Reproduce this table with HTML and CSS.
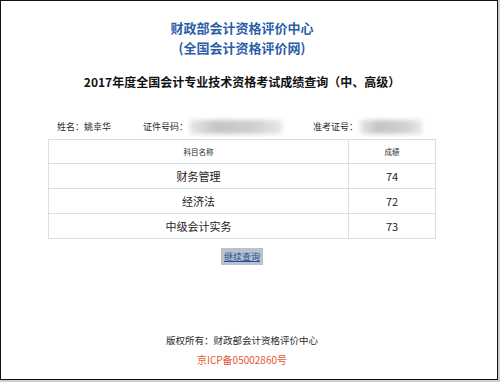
FILE: index.html
```html
<!DOCTYPE html>
<html lang="zh-CN">
<head>
<meta charset="utf-8">
<title>成绩查询</title>
<link rel="stylesheet" href="styles.css">
</head>
<body>
<div class="frame">
  <div class="content">
    <div class="org">
      <div>财政部会计资格评价中心</div>
      <div>(全国会计资格评价网)</div>
    </div>
    <div class="heading">2017年度全国会计专业技术资格考试成绩查询（中、高级）</div>
    <div class="info">
      <div class="info-item name">姓名：姚幸华</div>
      <div class="info-item idno">证件号码：<span class="blur blur-id"></span></div>
      <div class="info-item exam">准考证号：<span class="blur blur-exam"></span></div>
    </div>
    <table class="scores">
      <tr class="head"><th class="c-subject">科目名称</th><th class="c-score">成绩</th></tr>
      <tr><td>财务管理</td><td>74</td></tr>
      <tr><td>经济法</td><td>72</td></tr>
      <tr><td>中级会计实务</td><td>73</td></tr>
    </table>
    <div class="btn-row"><a class="btn" href="#">继续查询</a></div>
    <div class="footer">
      <div class="copy">版权所有：财政部会计资格评价中心</div>
      <div class="icp">京ICP备05002860号</div>
    </div>
  </div>
</div>
</body>
</html>
```
FILE: styles.css
```css
html, body {
  margin: 0;
  padding: 0;
  background: #cfcfcf;
}
body {
  font-family: "Noto Sans CJK SC", "Noto Sans", sans-serif;
  color: #222;
}
.frame {
  box-sizing: border-box;
  width: 498px;
  height: 380px;
  border: 1px solid #111;
  background: #fff;
  padding: 17px 14px 0 0;
}
.content {
  display: flex;
  flex-direction: column;
  align-items: center;
}
.org {
  color: #2b5ea8;
  font-weight: bold;
  font-size: 13px;
  line-height: 20px;
  text-align: center;
}
.heading {
  margin-top: 14px;
  font-size: 12px;
  font-weight: bold;
  line-height: 20px;
  color: #111;
}
.info {
  margin-top: 27px;
  width: 388px;
  box-sizing: border-box;
  padding-left: 9px;
  display: flex;
  align-items: center;
  font-size: 9px;
  line-height: 16px;
  color: #2a2a2a;
  height: 16px;
}
.info-item {
  display: flex;
  align-items: center;
}
.name { width: 86px; }
.idno { width: 170px; }
.blur {
  display: inline-block;
  height: 14px;
  background: linear-gradient(90deg, #e6e6e6, #c4c4c4 30%, #cfcfcf 70%, #e8e8e8);
  filter: blur(2px);
  margin-left: 2px;
}
.blur-id { width: 92px; }
.blur-exam { width: 62px; }
.scores {
  margin-top: 4px;
  width: 388px;
  border-collapse: collapse;
  border: 1px solid #d9e6ea;
  text-align: center;
}
.scores th, .scores td {
  border: 1px solid #d3e2e8;
  padding: 0;
  font-weight: normal;
}
.scores th {
  height: 23px;
  font-size: 7.5px;
  color: #2a2a2a;
}
.scores td {
  height: 24px;
  font-size: 11px;
  color: #222;
}
.c-subject { width: 299px; }
.btn-row {
  margin-top: 9px;
}
.btn {
  display: block;
  width: 42px;
  height: 17px;
  line-height: 17px;
  background: #bcc0cc;
  color: #1b4f9b;
  font-size: 9px;
  text-align: center;
  text-decoration: underline;
}
.footer {
  margin-top: 67px;
  text-align: center;
}
.copy {
  font-size: 9.5px;
  line-height: 16px;
  color: #2a2a2a;
}
.icp {
  margin-top: 4px;
  font-size: 10px;
  line-height: 16px;
  color: #e2582f;
}
```
